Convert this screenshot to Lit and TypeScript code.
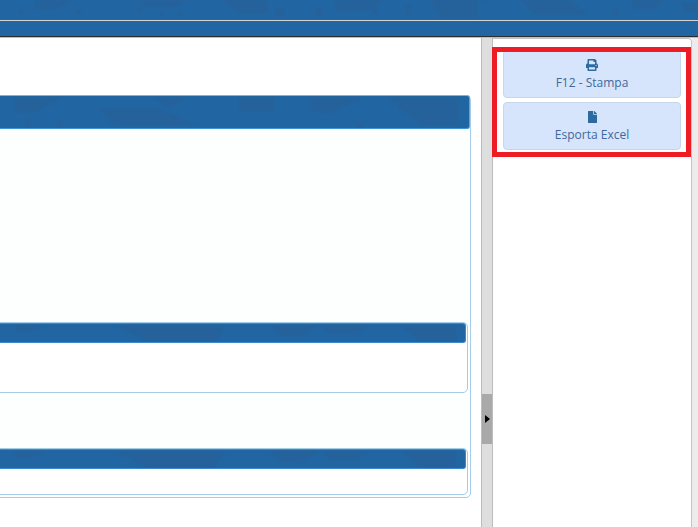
import { LitElement, html, css, svg } from "lit";
import { customElement } from "lit/decorators.js";

const TOP = [
  "35,0 75,0 55,10 35,10", "18,9 24,9 24,15 18,15", "76,9 82,9 82,14 76,14", "137,7 144,7 144,13 137,13",
  "158,12 165,12 165,17 158,17", "178,12 184,12 184,16 178,16", "140,0 190,0 175,7 145,7", "222,0 240,0 240,15",
  "240,0 268,0 268,14 240,14", "275,7 285,7 285,17 275,17", "315,8 323,8 323,17 315,17", "335,0 385,0 370,11 335,12",
  "372,7 378,7 378,14 372,14", "405,5 412,5 412,15 405,15", "430,0 478,0 478,18 440,18", "478,0 490,0 490,4",
  "520,0 570,0 590,15 535,15", "612,8 618,8 618,15 612,15", "632,0 665,0 655,9 632,9", "680,2 698,2 698,12 685,12",
];
const BIG = [
  "25,1 75,1 45,17 25,17", "110,12 170,12 210,30 125,30", "163,1 198,1 180,12", "35,24 42,24 42,31 35,31",
  "68,24 74,24 74,31 68,31", "250,1 285,1 285,16 250,16", "320,1 375,1 340,18 320,14", "367,26 375,26 375,33 367,33",
  "400,1 470,1 470,30 435,30 410,12",
];
const SUB = [
  "25,1 55,1 40,8 25,8", "125,1 235,1 225,19 160,19", "165,1 200,1 190,8", "280,1 330,1 310,12 290,12",
  "410,1 466,1 466,19 432,19", "330,1 380,1 365,10 340,10",
];

const texture = (w: number, h: number, polys: string[]) => svg`
  <svg class="tex" viewBox="0 0 ${w} ${h}" width=${w} height=${h} aria-hidden="true">
    <g class="tex-shapes">
      ${polys.map((p) => svg`<polygon points=${p}></polygon>`)}
    </g>
  </svg>`;

@customElement("app-root")
export class AppRoot extends LitElement {
  static styles = css`
    :host { display: block; width: 698px; height: 527px; overflow: hidden; position: relative; background: #fff; font-family: "Open Sans", sans-serif; }
    .top { height: 37px; box-sizing: border-box; background: #2166a3; position: relative; overflow: hidden; border-bottom: 1px solid #2b2f33; display: flex; flex-direction: column; }
    .top-a { height: 20px; flex: none; }
    .top-line { height: 1px; flex: none; background: #d4d4d4; position: relative; }
    .shadow { height: 1px; background: #bdbdbd; }
    .tex { position: absolute; left: 0; top: 0; }
    .tex-shapes { fill: #2a5e94; opacity: 0.5; filter: blur(1px); }
    .main { display: flex; height: 489px; }
    .left { width: 481px; flex: none; overflow: hidden; padding-top: 57px; box-sizing: border-box; }
    .panel { margin-left: -12px; width: 483px; height: 403px; box-sizing: border-box; border: 1px solid #a5cde8; border-radius: 5px; background: #fcfffe; display: flex; flex-direction: column; }
    .bar { position: relative; overflow: hidden; background: #2166a3; border-radius: 3px; flex: none; }
    .bar.big { height: 34px; margin: -1px 0 0 0; box-sizing: border-box; border-top: 1px solid #7db3dc; border-bottom: 1px solid #3f92d4; border-right: 1px solid #5fa3d8; }
    .bar.small { height: 20px; box-sizing: border-box; margin: 0 1px 0 0; border: 1px solid #3a8ad0; border-left: none; }
    .sub { margin-left: 0; margin-right: 2px; box-sizing: border-box; border: 1px solid #a5cde8; border-radius: 5px; background: #fff; flex: none; }
    .sub.one { height: 71px; margin-top: 193px; }
    .sub.two { height: 47px; margin-top: 55px; }
    .gutter { width: 12px; flex: none; box-sizing: border-box; background: #dedede; border-left: 1px solid #bcbcbc; border-right: 1px solid #bcbcbc; display: flex; flex-direction: column; }
    .handle { margin-top: 356px; height: 50px; background: #a9a9a9; display: flex; align-items: center; justify-content: center; }
    .arrow { width: 0; height: 0; border-left: 5px solid #000; border-top: 4px solid transparent; border-bottom: 4px solid transparent; margin-left: 1px; }
    .right { width: 199px; flex: none; box-sizing: border-box; background: #fff; border: 1px solid #c4c4c4; border-left: none; border-bottom: none; border-radius: 0 4px 0 0; padding: 11px 10px 0 10px; display: flex; flex-direction: column; gap: 4px; }
    .rest { flex: 1; background: #ececec; }
    .btn { height: 48px; box-sizing: border-box; background: #d7e5fc; border: 1px solid #c5d7ec; border-radius: 4px; color: #40699a; font-family: inherit; font-size: 12px; line-height: 16px; display: flex; flex-direction: column; align-items: center; justify-content: center; gap: 4px; padding: 1px 0 0; }
    .btn svg { display: block; fill: #2c6aa0; }
    .mark { position: absolute; left: 492px; top: 47px; width: 199px; height: 110px; box-sizing: border-box; border: 5px solid #ee1c25; pointer-events: none; }
  `;

  render() {
    return html`
      <div class="top">
        ${texture(698, 20, TOP)}
        <div class="top-a"></div>
        <div class="top-line"></div>
      </div>
      <div class="shadow"></div>
      <div class="main">
        <div class="left">
          <div class="panel">
            <div class="bar big">${texture(481, 34, BIG)}</div>
            <div class="sub one"><div class="bar small">${texture(478, 20, SUB)}</div></div>
            <div class="sub two"><div class="bar small">${texture(478, 20, SUB)}</div></div>
          </div>
        </div>
        <div class="gutter"><div class="handle"><div class="arrow"></div></div></div>
        <div class="right">
          <button class="btn">
            <svg width="12" height="12" viewBox="0 0 512 512"><path d="M448 192V77.25c0-8.49-3.37-16.62-9.37-22.63L393.37 9.37c-6-6-14.14-9.37-22.63-9.37H96C78.33 0 64 14.33 64 32v160c-35.35 0-64 28.65-64 64v112c0 8.84 7.16 16 16 16h48v96c0 17.67 14.33 32 32 32h320c17.67 0 32-14.33 32-32v-96h48c8.84 0 16-7.16 16-16V256c0-35.35-28.65-64-64-64zm-64 256H128v-96h256v96zm0-224H128V64h192v48c0 8.84 7.16 16 16 16h48v96zm48 72c-13.25 0-24-10.75-24-24 0-13.26 10.75-24 24-24s24 10.74 24 24c0 13.25-10.75 24-24 24z"></path></svg>
            <span>F12 - Stampa</span>
          </button>
          <button class="btn">
            <svg width="9" height="12" viewBox="0 0 384 512"><path d="M224 136V0H24C10.7 0 0 10.7 0 24v464c0 13.3 10.7 24 24 24h336c13.3 0 24-10.7 24-24V160H248c-13.2 0-24-10.8-24-24zm160-14.1v6.100H256V0h6.100c6.400 0 12.500 2.500 17 7l97.900 98c4.500 4.500 7 10.600 7 16.900z"></path></svg>
            <span>Esporta Excel</span>
          </button>
        </div>
        <div class="rest"></div>
      </div>
      <div class="mark"></div>
    `;
  }
}
